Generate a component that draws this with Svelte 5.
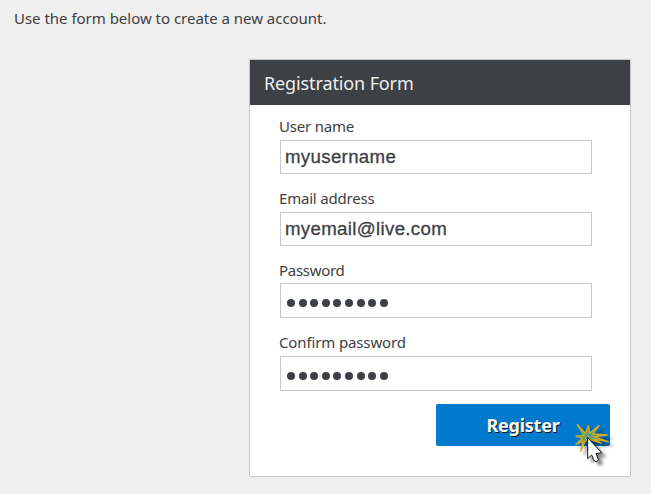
<script>
  const fields = [
    { id: 'user', label: 'User name', value: 'myusername' },
    { id: 'email', label: 'Email address', value: 'myemail@live.com' },
    { id: 'password', label: 'Password', dots: 9 },
    { id: 'confirm', label: 'Confirm password', dots: 9 }
  ];
</script>

<main>
  <p class="intro">Use the form below to create a new account.</p>
  <section class="card">
    <h1>Registration Form</h1>
    <div class="fields">
      {#each fields as field}
        <div class="field {field.id}">
          <div class="label">{field.label}</div>
          <div class="input">
            {#if field.dots}
              <div class="dots">
                {#each Array(field.dots) as _}<i></i>{/each}
              </div>
            {:else}
              <span>{field.value}</span>
            {/if}
          </div>
        </div>
      {/each}
    </div>
    <div class="actions">
      <button type="button">Register</button>
      <svg class="pointer" viewBox="432 84 150 162" aria-hidden="true">
        <defs>
          <filter id="shadow" x="-50%" y="-50%" width="220%" height="220%">
            <feDropShadow dx="12" dy="11" stdDeviation="5" flood-color="#000" flood-opacity="0.45" />
          </filter>
        </defs>
        <g filter="url(#shadow)">
          <path
            d="M454 103 L478 130 L487 107 L491 130 L520 106 L500 132 L544 135 L504 140 L546 155 L502 147 L525 159 L486 147 L477 154 L464 184 L471 153 L450 163 L469 145 L450 138 L474 137 Z"
            fill="#6b9c6c" stroke="#d9ab1b" stroke-width="3.8" stroke-linejoin="round"
          />
        </g>
        <g filter="url(#shadow)">
          <path
            d="M485 143 L485 206 L497 195 L505 213 L511 215 L518 210 L510 191 L527 188 Z"
            fill="#fff" stroke="#111" stroke-width="3" stroke-linejoin="round"
          />
        </g>
      </svg>
    </div>
  </section>
</main>

<style>
  :global(body) { background: #efefef; }
  main {
    box-sizing: border-box;
    width: 651px;
    height: 494px;
    overflow: hidden;
    background: #efefef;
    color: #3d4045;
    font-family: "Noto Sans", "Open Sans", sans-serif;
  }
  .intro {
    margin: 0;
    height: 59px;
    box-sizing: border-box;
    padding: 7px 0 0 14px;
    font-size: 15px;
    line-height: 22px;
    letter-spacing: -0.02px;
    white-space: nowrap;
  }
  .card {
    box-sizing: border-box;
    width: 382px;
    height: 418px;
    margin-left: 249px;
    border: 1px solid #c8c8c8;
    background: #fff;
  }
  h1 {
    box-sizing: border-box;
    margin: 0;
    height: 45px;
    padding-left: 14px;
    background: #3d4045;
    color: #eee;
    font-size: 18px;
    font-weight: 400;
    line-height: 47px;
    letter-spacing: -0.12px;
  }
  .fields { padding: 11px 0 0 30px; }
  .field { height: 72px; }
  .label {
    height: 24px;
    margin-left: -1px;
    font-size: 15px;
    line-height: 20px;
    letter-spacing: -0.2px;
  }
  .password .label { height: 23px; letter-spacing: -0.3px; }
  .confirm .label { letter-spacing: -0.13px; }
  .input {
    box-sizing: border-box;
    display: flex;
    align-items: center;
    width: 312px;
    height: 34px;
    padding-left: 4px;
    border: 1px solid #c8c8c8;
    font: 18.67px/22px "Liberation Sans", Arial, sans-serif;
    letter-spacing: 0.33px;
    -webkit-text-stroke: 0.3px #3d4045;
  }
  .password .input, .confirm .input { height: 35px; }
  .dots { display: flex; gap: 3.6px; padding: 5px 0 0 2px; }
  .dots i { width: 8px; height: 8px; border-radius: 50%; background: #3d4045; }
  .actions { position: relative; padding-left: 186px; }
  button {
    display: block;
    width: 174px;
    height: 42px;
    margin: 0;
    padding: 0;
    border: 0;
    border-radius: 2px;
    background: #007acc;
    color: #fff;
    font: 700 18px/42px "Noto Sans", "Open Sans", sans-serif;
    letter-spacing: -0.25px;
    text-shadow: 1px 1px 0 #111;
  }
  .pointer {
    position: absolute;
    left: 320px;
    top: 14px;
    width: 50px;
    height: 54px;
  }
</style>
